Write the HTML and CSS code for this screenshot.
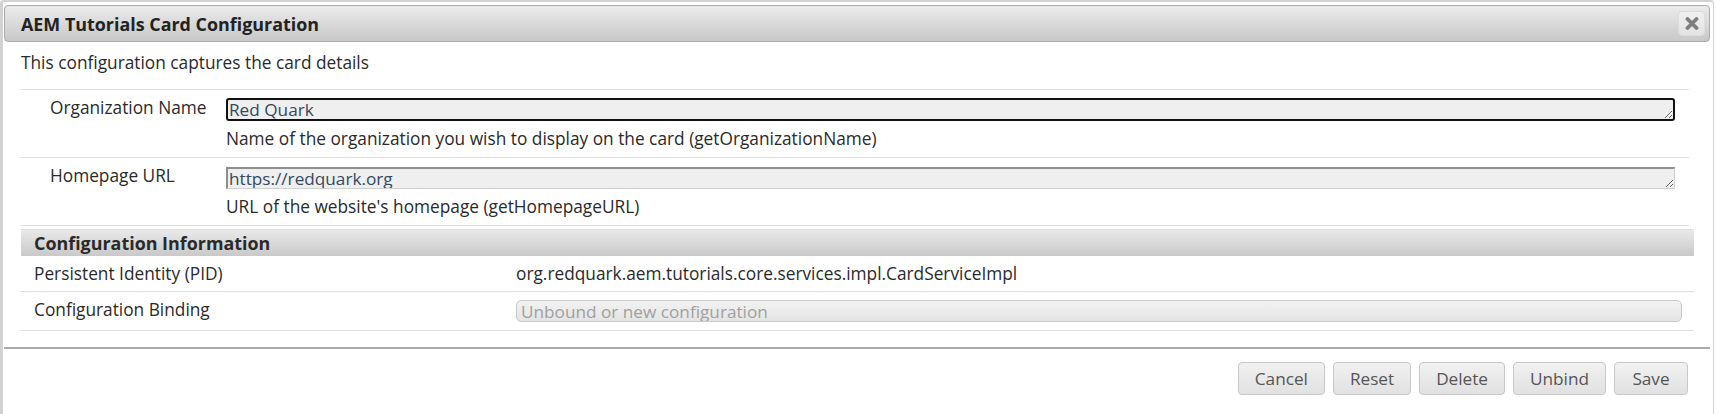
FILE: index.html
```html
<!DOCTYPE html>
<html lang="en">
<head>
<meta charset="utf-8">
<title>AEM Tutorials Card Configuration</title>
<link rel="stylesheet" href="styles.css">
</head>
<body>
<div class="dialog">
  <div class="titlebar">
    <span class="title">AEM Tutorials Card Configuration</span>
    <button class="close" type="button" aria-label="close">
      <svg width="14" height="13" viewBox="0 0 14 13"><path d="M2.5 2 L11.5 11 M11.5 2 L2.5 11" stroke="#7d7d7d" stroke-width="3.8" stroke-linecap="round"/></svg>
    </button>
  </div>
  <div class="content">
    <p class="intro">This configuration captures the card details</p>
    <div class="props">
      <div class="prop-row">
        <div class="prop-label">Organization Name</div>
        <div class="prop-value">
          <textarea class="field focused" rows="1">Red Quark</textarea>
          <div class="prop-desc">Name of the organization you wish to display on the card (getOrganizationName)</div>
        </div>
      </div>
      <div class="prop-row">
        <div class="prop-label">Homepage URL</div>
        <div class="prop-value">
          <textarea class="field" rows="1">https://redquark.org</textarea>
          <div class="prop-desc">URL of the website's homepage (getHomepageURL)</div>
        </div>
      </div>
    </div>
    <div class="info">
      <div class="info-head">Configuration Information</div>
      <div class="info-row pid">
        <div class="info-label">Persistent Identity (PID)</div>
        <div class="info-value">org.redquark.aem.tutorials.core.services.impl.CardServiceImpl</div>
      </div>
      <div class="info-row binding">
        <div class="info-label">Configuration Binding</div>
        <div class="info-value"><input class="bind" type="text" placeholder="Unbound or new configuration" disabled></div>
      </div>
    </div>
  </div>
  <div class="buttonpane">
    <button class="btn" type="button">Cancel</button>
    <button class="btn" type="button">Reset</button>
    <button class="btn" type="button">Delete</button>
    <button class="btn" type="button">Unbind</button>
    <button class="btn" type="button">Save</button>
  </div>
</div>
</body>
</html>
```
FILE: styles.css
```css
html, body {
  margin: 0;
  padding: 0;
  overflow: hidden;
  background: #fff;
}
body {
  font-family: "Open Sans", "Noto Sans", sans-serif;
  font-size: 17.3px;
  color: #2a2a2a;
}
.dialog {
  box-sizing: border-box;
  width: 1714px;
  height: 414px;
  border-style: solid;
  border-color: #d2d2d2;
  border-width: 2px 1px 0 3px;
  border-radius: 4px 4px 0 0;
  padding: 3px 3px 0 1px;
  display: flex;
  flex-direction: column;
}
.titlebar {
  box-sizing: border-box;
  height: 37px;
  flex: none;
  border: 1px solid #aaaaaa;
  border-radius: 4px;
  background: linear-gradient(#ebebeb, #c8c8c8);
  display: flex;
  align-items: center;
  justify-content: space-between;
  padding: 0 4px 0 16px;
}
.title {
  font-weight: 700;
  font-size: 17.9px;
  color: #222;
}
.close {
  box-sizing: border-box;
  width: 27px;
  height: 25px;
  padding: 0;
  border: 1px solid #dcdcdc;
  border-radius: 4px;
  background: linear-gradient(#f0f0f0, #e2e2e2);
  display: flex;
  align-items: center;
  justify-content: center;
}
.content {
  padding: 0 16px 16px 17px;
}
.intro {
  margin: 11px 0 16px 0;
  line-height: 20px;
}
.props {
  margin-right: 5px;
  border-top: 1px solid #dddddd;
}
.prop-row {
  display: grid;
  grid-template-columns: 205px 1fr;
  border-bottom: 1px solid #dddddd;
  padding: 8px 0;
}
.prop-label {
  padding-left: 29px;
  line-height: 20px;
}
.prop-value {
  padding-right: 14px;
  display: flex;
  flex-direction: column;
}
.field {
  box-sizing: border-box;
  display: block;
  width: 100%;
  height: 22px;
  margin: 1px 0 0;
  padding: 0 1px;
  font-family: inherit;
  font-size: 17.2px;
  line-height: 19px;
  color: #34495c;
  background: #efefef;
  overflow: hidden;
  border-style: solid;
  border-width: 2px 1px 1px 2px;
  border-color: #8e8e8e #cfcfcf #cfcfcf #8e8e8e;
  border-radius: 0;
}
.field.focused {
  height: 23px;
  margin-top: 0;
  border: 2px solid #111;
  border-radius: 3px;
}
.prop-desc {
  margin-top: 8px;
  line-height: 20px;
}
.info {
  margin-top: 3px;
}
.info-head {
  box-sizing: border-box;
  height: 27px;
  padding-left: 13px;
  display: flex;
  align-items: center;
  font-weight: 700;
  font-size: 17.9px;
  color: #2a2a2a;
  background: linear-gradient(#e9e9e9, #c9c9c9);
  border-top: 1px solid #e2e2e2;
}
.info-row {
  box-sizing: border-box;
  display: grid;
  grid-template-columns: 495px 1fr;
  align-items: center;
  border-bottom: 1px solid #dddddd;
}
.info-row.pid {
  height: 36px;
}
.info-row.binding {
  height: 39px;
}
.info-label {
  padding-left: 13px;
  line-height: 20px;
}
.binding .info-label {
  padding-bottom: 3px;
}
.info-value {
  padding-right: 12px;
  line-height: 20px;
}
.bind {
  box-sizing: border-box;
  display: block;
  width: 100%;
  height: 22px;
  margin: 0;
  padding: 0 4px;
  font-family: inherit;
  font-size: 17.2px;
  color: #999;
  border: 1px solid #c9c9c9;
  border-radius: 5px;
  background: linear-gradient(#f2f2f2, #e4e4e4);
}
.bind::placeholder {
  color: #a0a0a0;
}
.buttonpane {
  border-top: 2px solid #ababab;
  padding: 13px 22px 0 0;
  display: flex;
  justify-content: flex-end;
  gap: 8px;
}
.btn {
  box-sizing: border-box;
  height: 33px;
  min-width: 74px;
  padding: 0 16px;
  font-family: inherit;
  font-size: 17.2px;
  color: #555;
  border: 1px solid #c8c8c8;
  border-radius: 4px;
  background: linear-gradient(#f1f1f1, #e1e1e1);
}
```
